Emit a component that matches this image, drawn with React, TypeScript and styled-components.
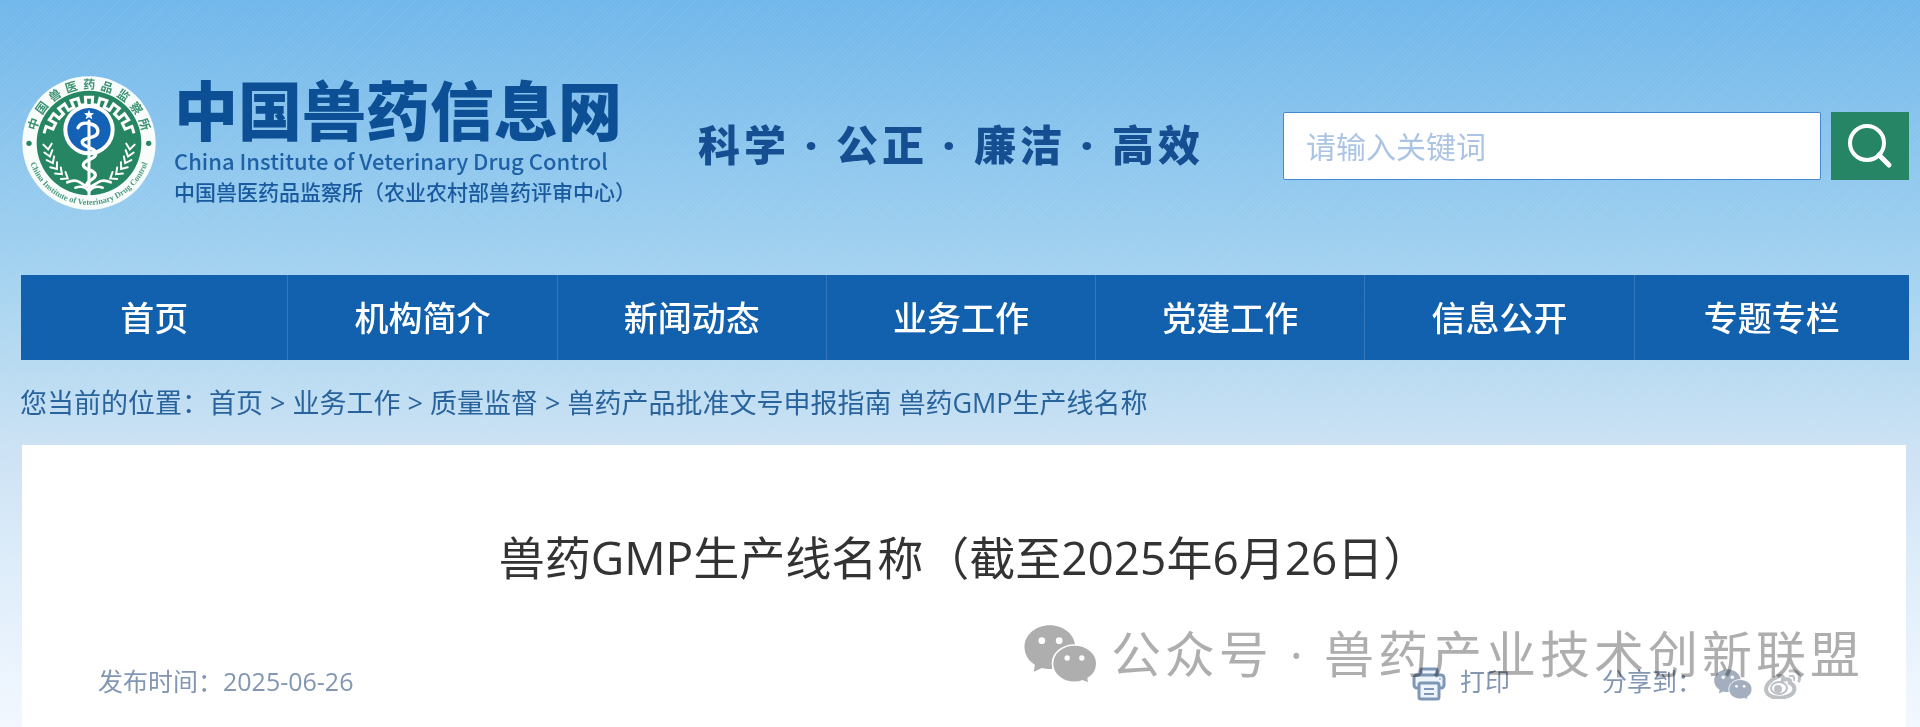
import React from "react";
import styled, { createGlobalStyle } from "styled-components";

const sans = `"Open Sans", "Noto Sans CJK SC", sans-serif`;
const cjk = `"Noto Sans CJK SC", sans-serif`;

const GlobalStyle = createGlobalStyle`
  *, *::before, *::after { box-sizing: border-box; }
  body { margin: 0; font-family: ${sans}; }
  a { color: inherit; text-decoration: none; }
`;

const Page = styled.div`
  min-height: 100vh;
  display: flex;
  flex-direction: column;
  overflow-x: hidden;
  background:
    repeating-linear-gradient(135deg, rgba(255, 255, 255, 0.05) 0 1px, transparent 1px 3px),
    linear-gradient(180deg, #70b7eb 0, #87c3ed 120px, #a3d2f0 270px, #b9dbf1 370px, #cbe1f4 445px, #dcecf9 560px, #f3f8ff 727px);
`;

const Header = styled.header`
  display: flex;
  align-items: center;
  padding: 76px 11px 65px 22px;
`;

const Brand = styled.a`
  display: flex;
  align-items: center;
  gap: 18px;
  flex: none;
`;

const BrandText = styled.div`
  display: flex;
  flex-direction: column;
  font-family: ${cjk};
  color: #0d4f94;
  white-space: nowrap;
  width: 448px;
`;

const SiteName = styled.strong`
  margin-bottom: 10px;
  font-size: 64px;
  font-weight: 900;
  line-height: 54px;
`;

const EnglishName = styled.span`
  font-size: 22px;
  font-weight: 500;
  line-height: 32px;
  color: #1f61a5;
`;

const Institute = styled.span`
  font-size: 21px;
  font-weight: 500;
  line-height: 30px;
  color: #19599d;
`;

const Slogan = styled.p`
  margin: 4px 0 0 76px;
  flex: none;
  font-family: ${sans};
  font-size: 42px;
  font-weight: 900;
  line-height: 48px;
  letter-spacing: 4px;
  color: #164f91;
  white-space: nowrap;
`;

const SearchForm = styled.form`
  display: flex;
  gap: 10px;
  flex: 0 1 626px;
  min-width: 0;
  margin: 6px 0 0 auto;
`;

const SearchInput = styled.input`
  flex: 1;
  min-width: 0;
  height: 68px;
  padding: 0 22px;
  border: 1px solid #4688cf;
  border-radius: 2px;
  background: #fff;
  color: #1d4f86;
  font-family: ${sans};
  font-size: 30px;
  &::placeholder { color: #abc4e3; opacity: 1; }
`;

const SearchButton = styled.button`
  flex: none;
  width: 78px;
  height: 68px;
  display: grid;
  place-items: center;
  padding: 0;
  border: 0;
  background: #268564;
`;

const Nav = styled.nav`
  display: grid;
  grid-template-columns: 267fr repeat(5, 269fr) 274fr;
  margin: 0 11px 0 21px;
  background: repeating-linear-gradient(135deg, rgba(0, 40, 90, 0.04) 0 1px, transparent 1px 6px), #1261ae;
`;

const NavLink = styled.a`
  display: block;
  padding: 21px 0 19px;
  border-right: 1px solid #3577b8;
  color: #fff;
  font-size: 34px;
  font-weight: 500;
  line-height: 45px;
  text-align: center;
  white-space: nowrap;
  &:last-child { border-right: 0; }
`;

const Breadcrumb = styled.nav`
  padding: 25px 20px 24px;
  color: #28639c;
  font-size: 27px;
  line-height: 36px;
  white-space: pre;
`;

const Article = styled.main`
  position: relative;
  flex: 1;
  margin: 0 14px 0 22px;
  padding: 82px 76px 24px;
  background: #fff;
`;

const Title = styled.h1`
  margin: 0;
  color: #333;
  font-size: 46px;
  font-weight: 400;
  line-height: 60px;
  text-align: center;
`;

const Meta = styled.div`
  display: flex;
  align-items: center;
  margin-top: 74px;
  color: #8396b2;
  font-size: 25px;
  line-height: 40px;
  svg { margin-top: 6px; }
`;

const PrintButton = styled.button`
  display: flex;
  align-items: center;
  gap: 14px;
  margin-left: auto;
  padding: 0;
  border: 0;
  background: none;
  color: inherit;
  font: inherit;
`;

const Share = styled.div`
  display: flex;
  align-items: center;
  gap: 12px;
  margin: 0 28px 0 92px;
`;

const ShareLink = styled.a`
  display: flex;
  color: #a3afbe;
`;

const Watermark = styled.div`
  position: absolute;
  top: 173px;
  right: 42px;
  display: flex;
  align-items: center;
  gap: 14px;
  color: #aeaeae;
  font-size: 50px;
  line-height: 72px;
  letter-spacing: 4px;
  white-space: pre;
  mix-blend-mode: multiply;
  pointer-events: none;
`;

function polar(r: number, deg: number, cx = 267, cy = 248) {
  const a = (deg * Math.PI) / 180;
  return `${(cx + r * Math.cos(a)).toFixed(1)} ${(cy + r * Math.sin(a)).toFixed(1)}`;
}

// Crenellated cog line that runs over the upper half of the emblem.
function cogPath() {
  const teeth = 9;
  const start = 192;
  const step = (348 - start) / (teeth * 2 - 1);
  let d = "";
  for (let i = 0; i < teeth * 2 - 1; i++) {
    const r = i % 2 ? 116 : 138;
    d += `${i ? "L" : "M"}${polar(r, start + i * step)} L${polar(r, start + (i + 1) * step)} `;
  }
  return d;
}

const leaves = [178, 168, 158, 148, 138, 128];

function Laurel() {
  return (
    <g fill="none" stroke="#fff" strokeWidth="6" strokeLinecap="round">
      {leaves.map((deg) => (
        <path key={deg} d={`M${polar(137, deg)} L${polar(124, deg - 7)} L${polar(112, deg + 1)}`} />
      ))}
    </g>
  );
}

function Emblem() {
  return (
    <svg width="134" height="134" viewBox="66 47 402 402" overflow="visible" role="img" aria-label="中国兽医药品监察所">
      <defs>
        <path id="upperRing" d="M104 248 A163 163 0 0 1 430 248" />
        <path id="lowerRing" d="M81 248 A186 186 0 0 0 453 248" />
      </defs>
      <circle cx="267" cy="248" r="200" fill="#f8fdfb" />
      <circle cx="267" cy="248" r="157" fill="#268562" />
      <text fill="#3d9273" fontFamily='"Noto Sans CJK SC", sans-serif' fontSize="36" fontWeight="700">
        {[..."中国兽医药品监察所"].map((c, i) => (
          <textPath key={c} href="#upperRing" startOffset={`${10.5 + i * 9.9}%`} textAnchor="middle">
            {c}
          </textPath>
        ))}
      </text>
      <text fill="#4d9c80" fontFamily='"Liberation Serif", serif' fontSize="25" fontWeight="700">
        <textPath href="#lowerRing" startOffset="50%" textAnchor="middle">
          China Institute of Veterinary Drug Control
        </textPath>
      </text>
      <circle cx="87" cy="249" r="8" fill="#268562" />
      <circle cx="446" cy="249" r="8" fill="#268562" />
      <path d={cogPath()} fill="none" stroke="#fff" strokeWidth="9" />
      <Laurel />
      <g transform="translate(534 0) scale(-1 1)">
        <Laurel />
      </g>
      <circle cx="267" cy="208" r="77" fill="#fff" />
      <circle cx="267" cy="208" r="65" fill="#1462b6" />
      <path d="M267 148 l4 10 11 1 -8 7 3 11 -10 -6 -10 6 3 -11 -8 -7 11 -1z" fill="#fff" />
      <g fill="none" stroke="#fff" strokeLinecap="round" strokeLinejoin="round">
        <path d="M267 182 V407" strokeWidth="9" />
        <path
          strokeWidth="10"
          d="M234 202 C243 184 262 188 272 191 C296 196 302 220 280 229 C260 236 238 238 250 252 C262 264 288 262 287 282 C286 298 250 297 250 314 C250 331 286 326 286 344 C286 358 258 360 260 376"
        />
        <path strokeWidth="8" d="M202 366 Q224 356 240 366 T260 378 M332 366 Q310 356 294 366 T272 378 M226 382 Q250 374 264 390 M308 382 Q284 374 270 390" />
      </g>
    </svg>
  );
}

function WechatMark({ width, eye }: { width: number; eye: string }) {
  return (
    <svg width={width} height={Math.round(width * 0.81)} viewBox="68 71 218 177" aria-hidden="true">
      <path
        fill="currentColor"
        d="M145 72 C187 72 221 101 221 137 S187 203 145 203 Q132 203 121 200 L97 211 L100 190 C80 178 69 158 69 137 C69 101 103 72 145 72Z"
      />
      <g fill={eye}>
        <circle cx="121" cy="118" r="10" />
        <circle cx="173" cy="118" r="10" />
      </g>
      <path
        fill="currentColor"
        stroke={eye}
        strokeWidth="5"
        d="M219 131 C256 131 286 156 286 187 C286 206 276 221 260 231 L263 246 L242 239 Q231 243 219 243 C182 243 153 218 153 187 S182 131 219 131Z"
      />
      <g fill={eye}>
        <circle cx="197" cy="170" r="8" />
        <circle cx="241" cy="170" r="8" />
      </g>
    </svg>
  );
}

function PrinterIcon() {
  return (
    <svg width="34" height="34" viewBox="0 0 34 34" fill="#eef4fb" stroke="#7f97b6" strokeWidth="3" strokeLinejoin="round" aria-hidden="true">
      <path d="M9 9 V3 Q9 2 10 2 H24 Q25 2 25 3 V9" />
      <rect x="2" y="8" width="30" height="13" rx="3" />
      <rect x="7" y="16" width="20" height="16" rx="2" />
      <path d="M12 22 H22 M12 27 H22" strokeWidth="2" />
      <path d="M27 12 H29" strokeWidth="1" />
    </svg>
  );
}

function WeiboIcon() {
  return (
    <svg width="38" height="30" viewBox="0 0 38 30" fill="none" stroke="#bdc0c4" strokeLinecap="round" aria-hidden="true">
      <path
        strokeWidth="4"
        d="M13 8 C18 5 20 8 19 11 C24 9 27 11 26 14 C33 17 31 25 24 27 C14 31 2 28 2 20 C2 16 7 10 13 8Z"
      />
      <ellipse cx="15" cy="19" rx="8" ry="6" strokeWidth="2" />
      <circle cx="14" cy="20" r="4" fill="#bdc0c4" stroke="none" />
      <path strokeWidth="3" d="M26 2 C33 1 37 6 35 12" />
      <path strokeWidth="2" d="M26 7 C29 6 31 8 30 11" />
    </svg>
  );
}

function SearchIcon() {
  return (
    <svg width="46" height="46" viewBox="0 0 46 46" fill="none" stroke="#fff" strokeLinecap="round" aria-hidden="true">
      <circle cx="20" cy="20" r="17" strokeWidth="4" />
      <path d="M32 32 L42 42" strokeWidth="5" />
    </svg>
  );
}

const sections = ["首页", "机构简介", "新闻动态", "业务工作", "党建工作", "信息公开", "专题专栏"];
const trail = ["首页", "业务工作", "质量监督", "兽药产品批准文号申报指南"];

export default function App() {
  return (
    <Page>
      <GlobalStyle />
      <Header>
        <Brand href="#">
          <Emblem />
          <BrandText>
            <SiteName>中国兽药信息网</SiteName>
            <EnglishName>China Institute of Veterinary Drug Control</EnglishName>
            <Institute>中国兽医药品监察所（农业农村部兽药评审中心）</Institute>
          </BrandText>
        </Brand>
        <Slogan>科学 · 公正 · 廉洁 · 高效</Slogan>
        <SearchForm role="search" onSubmit={(e) => e.preventDefault()}>
          <SearchInput type="text" aria-label="请输入关键词" placeholder="请输入关键词" />
          <SearchButton type="submit" aria-label="搜索">
            <SearchIcon />
          </SearchButton>
        </SearchForm>
      </Header>
      <Nav>
        {sections.map((name) => (
          <NavLink href="#" key={name}>
            {name}
          </NavLink>
        ))}
      </Nav>
      <Breadcrumb aria-label="您当前的位置">
        您当前的位置：
        {trail.map((name, i) => (
          <React.Fragment key={name}>
            {i > 0 && " > "}
            <a href="#">{name}</a>
          </React.Fragment>
        ))}
        {" 兽药GMP生产线名称"}
      </Breadcrumb>
      <Article>
        <Title>兽药GMP生产线名称（截至2025年6月26日）</Title>
        <Meta>
          <span>发布时间：2025-06-26</span>
          <PrintButton type="button">
            <PrinterIcon />
            打印
          </PrintButton>
          <Share>
            分享到：
            <ShareLink href="#" aria-label="微信">
              <WechatMark width={38} eye="#fff" />
            </ShareLink>
            <ShareLink href="#" aria-label="微博">
              <WeiboIcon />
            </ShareLink>
          </Share>
        </Meta>
        <Watermark>
          <WechatMark width={73} eye="#fff" />
          <span>公众号 · 兽药产业技术创新联盟</span>
        </Watermark>
      </Article>
    </Page>
  );
}
